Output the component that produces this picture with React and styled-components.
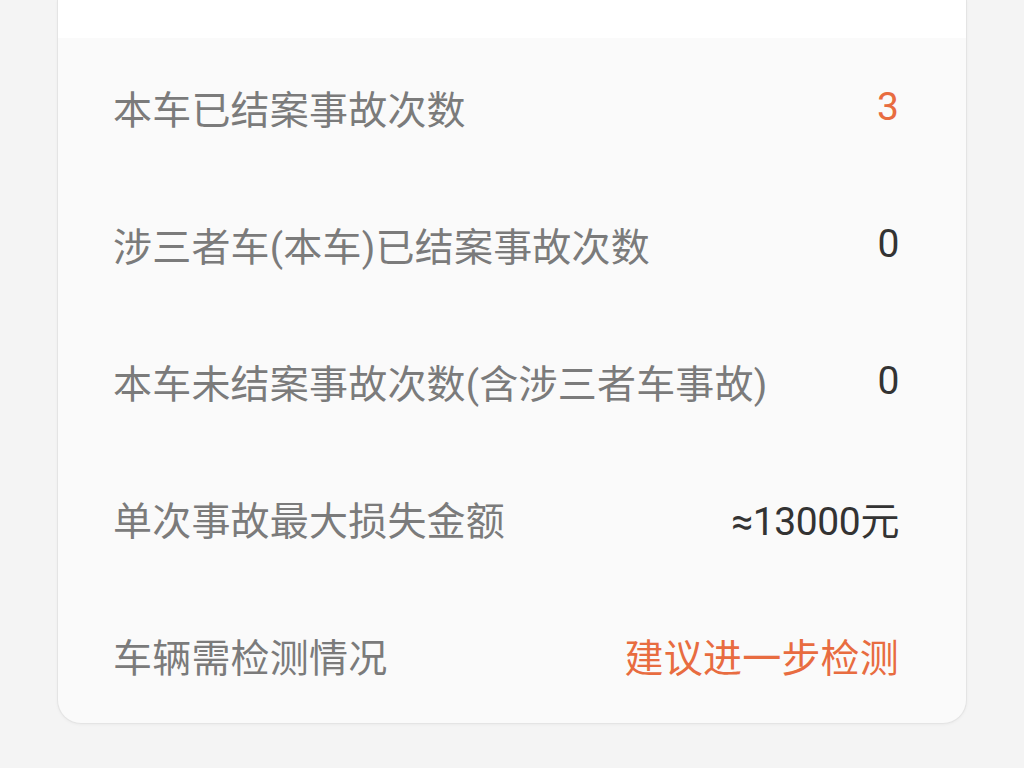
import React from 'react'
import styled, { createGlobalStyle } from 'styled-components'

const GlobalStyle = createGlobalStyle`
  html, body {
    margin: 0;
    padding: 0;
    background-color: #f4f4f4;
    font-family: Roboto, "Noto Sans CJK SC", "Noto Sans", sans-serif;
  }
`

const Page = styled.div`
  width: 1024px;
  height: 768px;
  overflow: hidden;
  padding: 0 57px;
  box-sizing: border-box;
`

const Card = styled.section`
  background-color: #fafafa;
  border: 1.5px solid #e4e4e4;
  border-top: none;
  border-radius: 0 0 24px 24px;
  box-shadow: 0 1px 3px rgba(0, 0, 0, 0.04);
  overflow: hidden;
`

const CardTop = styled.div`
  height: 38px;
  background-color: #ffffff;
`

const Row = styled.div`
  height: 137px;
  display: flex;
  align-items: center;
  justify-content: space-between;
  padding: 0 67px 0 55px;
  font-size: 39px;
  letter-spacing: 0.2px;
`

const Label = styled.span`
  color: #7b7b7b;
`

const Value = styled.span`
  color: ${props => (props.highlight ? '#e86c40' : '#333333')};
  letter-spacing: ${props => (props.highlight ? '0.2px' : '-0.4px')};
`

const rows = [
  { label: '本车已结案事故次数', value: '3', highlight: true },
  { label: '涉三者车(本车)已结案事故次数', value: '0' },
  { label: '本车未结案事故次数(含涉三者车事故)', value: '0' },
  { label: '单次事故最大损失金额', value: '≈13000元' },
  { label: '车辆需检测情况', value: '建议进一步检测', highlight: true }
]

function App() {
  return (
    <>
      <GlobalStyle />
      <Page>
        <Card>
          <CardTop />
          {rows.map((row) => (
            <Row key={row.label}>
              <Label>{row.label}</Label>
              <Value highlight={row.highlight}>{row.value}</Value>
            </Row>
          ))}
        </Card>
      </Page>
    </>
  )
}

export default App
